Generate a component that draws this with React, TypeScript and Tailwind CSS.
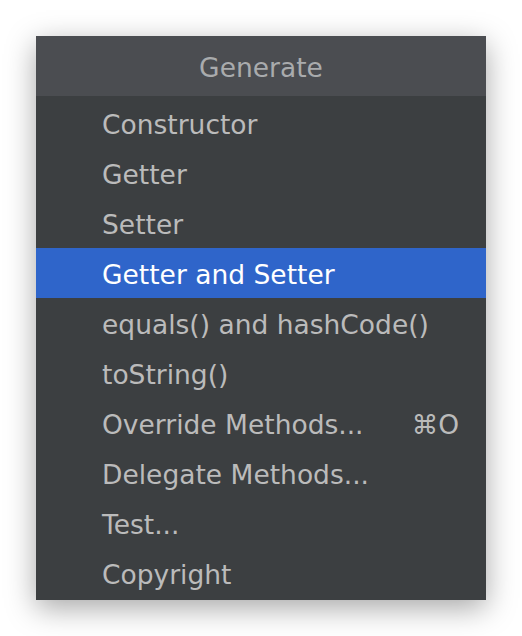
const items: { label: string; shortcut?: string; selected?: boolean }[] = [
  { label: 'Constructor' },
  { label: 'Getter' },
  { label: 'Setter' },
  { label: 'Getter and Setter', selected: true },
  { label: 'equals() and hashCode()' },
  { label: 'toString()' },
  { label: 'Override Methods...', shortcut: '⌘O' },
  { label: 'Delegate Methods...' },
  { label: 'Test...' },
  { label: 'Copyright' },
];

export default function App() {
  return (
    <div
      className="w-[522px] h-[636px] bg-white pt-[36px] pl-[36px]"
      style={{ fontFamily: '"DejaVu Sans", "Open Sans", sans-serif' }}
    >
      <div className="w-[450px] h-[564px] bg-[#3c3f41] shadow-[0_8px_28px_rgba(0,0,0,0.35)] flex flex-col">
        <div className="h-[60px] bg-[#4b4d51] flex items-center justify-center pt-[3px] text-[26.5px] text-[#a9abad]">
          Generate
        </div>
        <div className="flex flex-col py-[2px]">
          {items.map((item) => (
            <div
              key={item.label}
              className={`h-[50px] flex items-center justify-between pt-[4px] pl-[66px] pr-[27px] text-[26.5px] ${
                item.selected ? 'bg-[#2f65ca] text-white' : 'text-[#bbbbbb]'
              }`}
            >
              <span>{item.label}</span>
              {item.shortcut && <span>{item.shortcut}</span>}
            </div>
          ))}
        </div>
      </div>
    </div>
  );
}
